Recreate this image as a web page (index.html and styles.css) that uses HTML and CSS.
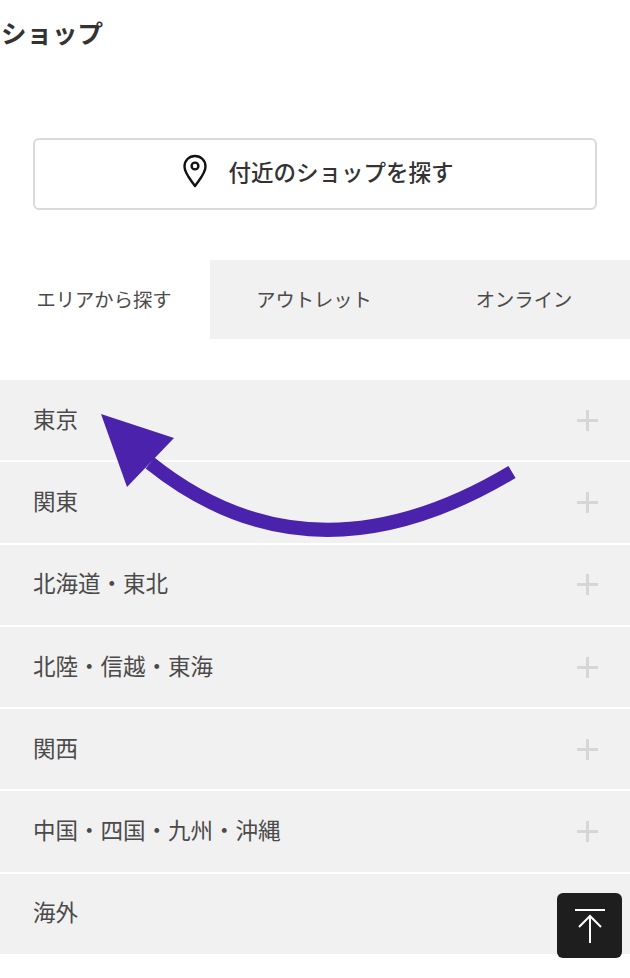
FILE: index.html
```html
<!DOCTYPE html>
<html lang="ja">
<head>
    <meta charset="UTF-8">
    <meta name="viewport" content="width=device-width, initial-scale=1.0">
    <title>ショップ</title>
    <link rel="stylesheet" href="styles.css">
</head>
<body>
    <div class="page">
        <h1 class="page-title">ショップ</h1>

        <div class="near-wrap">
            <a class="near-btn" href="#">
                <svg class="pin" width="26" height="34" viewBox="0 0 26 34" fill="none" stroke="#111" stroke-width="2.4">
                    <path d="M13 32 C9 26 2.5 19.500 2.500 12.500 C2.500 6.500 7 2 13 2 C19 2 23.500 6.500 23.500 12.500 C23.500 19.500 17 26 13 32 Z" stroke-linejoin="round"/>
                    <circle cx="13" cy="12" r="3.400"/>
                </svg>
                <span>付近のショップを探す</span>
            </a>
        </div>

        <div class="tabs">
            <div class="tab active">エリアから探す</div>
            <div class="tab">アウトレット</div>
            <div class="tab">オンライン</div>
        </div>

        <ul class="area-list">
            <li class="area-row"><span>東京</span><i class="plus"></i></li>
            <li class="area-row"><span>関東</span><i class="plus"></i></li>
            <li class="area-row"><span>北海道・東北</span><i class="plus"></i></li>
            <li class="area-row"><span>北陸・信越・東海</span><i class="plus"></i></li>
            <li class="area-row"><span>関西</span><i class="plus"></i></li>
            <li class="area-row"><span>中国・四国・九州・沖縄</span><i class="plus"></i></li>
            <li class="area-row"><span>海外</span><i class="plus"></i></li>
        </ul>

        <!-- annotation drawn over the list -->
        <svg class="arrow" width="630" height="978" viewBox="0 0 630 978">
            <path d="M150 463 Q311 592 512 472" fill="none" stroke="#4a22ac" stroke-width="14"/>
            <polygon points="101,414 174,438 127,487" fill="#4a22ac"/>
        </svg>

        <a class="to-top" href="#">
            <svg width="36" height="40" viewBox="0 0 36 40" fill="none" stroke="#fff" stroke-width="2">
                <path d="M3 4 H33"/>
                <path d="M18 37 V10"/>
                <path d="M7 21 L18 10 L29 21"/>
            </svg>
        </a>
    </div>
</body>
</html>
```

FILE: styles.css
```css
body {
    margin: 0;
    background: #fff;
    color: #333;
    font-family: "Noto Sans CJK JP", "Noto Sans", sans-serif;
}
.page {
    position: relative;
    width: 630px;
    height: 978px;
    overflow: hidden;
}
.page-title {
    margin: 0;
    padding: 14px 0 0 1px;
    height: 38px;
    font-size: 25.500px;
    line-height: 36px;
    font-weight: 700;
}
.near-wrap {
    padding: 86px 33px 0;
}
.near-btn {
    display: flex;
    align-items: center;
    justify-content: center;
    gap: 20px;
    box-sizing: border-box;
    height: 72px;
    padding: 0 0 6px 12px;
    border: 2px solid #d9d9d9;
    border-radius: 6px;
    color: #333;
    font-size: 22.500px;
    font-weight: 500;
    text-decoration: none;
}
.pin {
    margin-left: -6px;
}
.tabs {
    display: grid;
    grid-template-columns: 210px 1fr 1fr;
    margin-top: 50px;
    height: 79px;
    background: #f1f1f1;
}
.tab {
    display: flex;
    align-items: center;
    justify-content: center;
    padding: 0 2px 2px 0;
    font-size: 19.300px;
    color: #4a4a4a;
}
.tab.active {
    background: #fff;
}
.area-list {
    display: flex;
    flex-direction: column;
    gap: 2px;
    list-style: none;
    margin: 41px 0 0;
    padding: 0;
}
.area-row {
    display: flex;
    align-items: center;
    justify-content: space-between;
    height: 80.300px;
    padding: 0 33px;
    background: #f1f1f1;
    font-size: 22.500px;
    color: #4a4a4a;
}
.area-row span {
    padding-bottom: 5px;
}
.plus {
    position: relative;
    width: 21px;
    height: 21px;
    margin-right: -1px;
}
.plus::before,
.plus::after {
    content: "";
    position: absolute;
    background: #d6d6d6;
}
.plus::before {
    left: 0;
    right: 0;
    top: 9px;
    height: 3px;
}
.plus::after {
    top: 0;
    bottom: 0;
    left: 9px;
    width: 3px;
}
.arrow {
    position: absolute;
    left: 0;
    top: 0;
    pointer-events: none;
}
.to-top {
    position: absolute;
    left: 557px;
    top: 893px;
    display: flex;
    align-items: center;
    justify-content: center;
    width: 65px;
    height: 65px;
    border-radius: 6px;
    background: #1e1e1e;
}
```
